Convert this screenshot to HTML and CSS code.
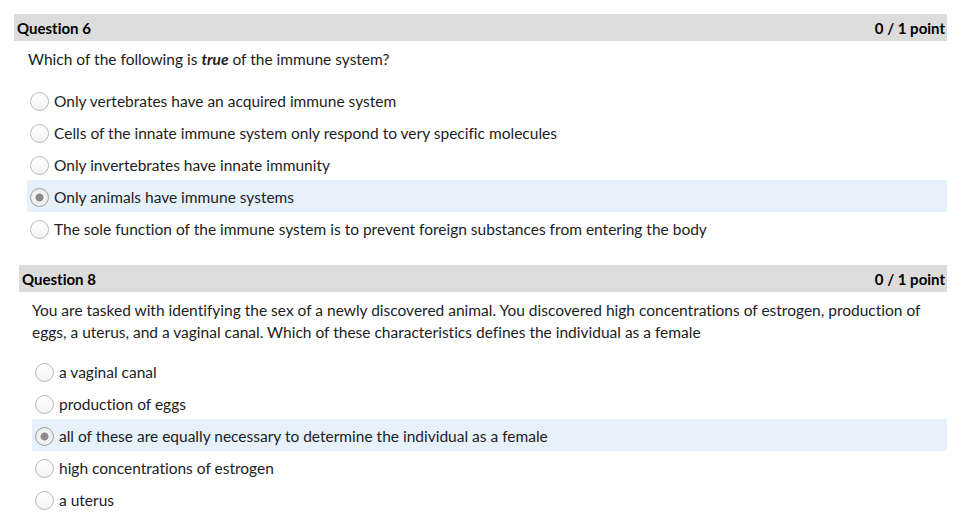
FILE: index.html
```html
<!DOCTYPE html>
<html>
<head>
<meta charset="utf-8">
<link rel="stylesheet" href="styles.css">
</head>
<body>
<section class="q q6">
  <div class="q-head"><span class="q-title">Question 6</span><span class="q-score">0 / 1 point</span></div>
  <p class="q-text">Which of the following is <em>true</em> of the immune system?</p>
  <ul class="opts">
    <li class="opt"><span class="radio"></span><span>Only vertebrates have an acquired immune system</span></li>
    <li class="opt"><span class="radio"></span><span>Cells of the innate immune system only respond to very specific molecules</span></li>
    <li class="opt"><span class="radio"></span><span>Only invertebrates have innate immunity</span></li>
    <li class="opt sel"><span class="radio on"></span><span>Only animals have immune systems</span></li>
    <li class="opt"><span class="radio"></span><span>The sole function of the immune system is to prevent foreign substances from entering the body</span></li>
  </ul>
</section>
<section class="q q8">
  <div class="q-head"><span class="q-title">Question 8</span><span class="q-score">0 / 1 point</span></div>
  <p class="q-text">You are tasked with identifying the sex of a newly discovered animal. You discovered high concentrations of estrogen, production of eggs, a uterus, and a vaginal canal. Which of these characteristics defines the individual as a female</p>
  <ul class="opts">
    <li class="opt"><span class="radio"></span><span>a vaginal canal</span></li>
    <li class="opt"><span class="radio"></span><span>production of eggs</span></li>
    <li class="opt sel"><span class="radio on"></span><span>all of these are equally necessary to determine the individual as a female</span></li>
    <li class="opt"><span class="radio"></span><span>high concentrations of estrogen</span></li>
    <li class="opt"><span class="radio"></span><span>a uterus</span></li>
  </ul>
</section>
</body>
</html>
```

FILE: styles.css
```css
html, body {
  margin: 0;
  padding: 0;
  background: #ffffff;
}
body {
  font-family: Lato, "Noto Sans", sans-serif;
  color: #1c1d1e;
  font-size: 15.5px;
  font-variant-ligatures: none;
}
.q {
  margin-right: 15px;
}
.q6 {
  margin-left: 14px;
  padding-top: 14px;
}
.q8 {
  margin-left: 19px;
  padding-top: 21px;
}
.q-head {
  display: flex;
  justify-content: space-between;
  align-items: center;
  height: 27px;
  background: #dcdcdc;
  padding: 0 2px 0 3px;
  font-weight: 700;
  font-size: 15px;
  color: #000;
}
.q-text {
  margin: 0;
  line-height: 22px;
}
.q6 .q-text {
  padding: 7px 0 0 14px;
}
.q8 .q-text {
  padding: 7px 20px 0 13px;
}
.q-text em {
  font-weight: 700;
}
.opts {
  list-style: none;
  margin: 0;
  padding: 0;
}
.q6 .opts {
  margin: 14px 0 0 13px;
}
.q8 .opts {
  margin: 12px 0 0 13px;
}
.opt {
  display: flex;
  align-items: center;
  height: 32px;
  padding-left: 3px;
  gap: 5px;
  padding-top: 2px;
  box-sizing: border-box;
}
.opt.sel {
  background: #e6f1fb;
}
.radio {
  width: 17px;
  height: 17px;
  border-radius: 50%;
  border: 1px solid #b9b9b9;
  background: linear-gradient(#ffffff, #f3f3f3);
  flex: none;
  box-sizing: content-box;
}
.radio.on {
  border-color: #a0a0a0;
  background: radial-gradient(circle, #8a8a8a 0 3.5px, #f4f4f4 4.5px, #e2e2e2 100%);
}
```
